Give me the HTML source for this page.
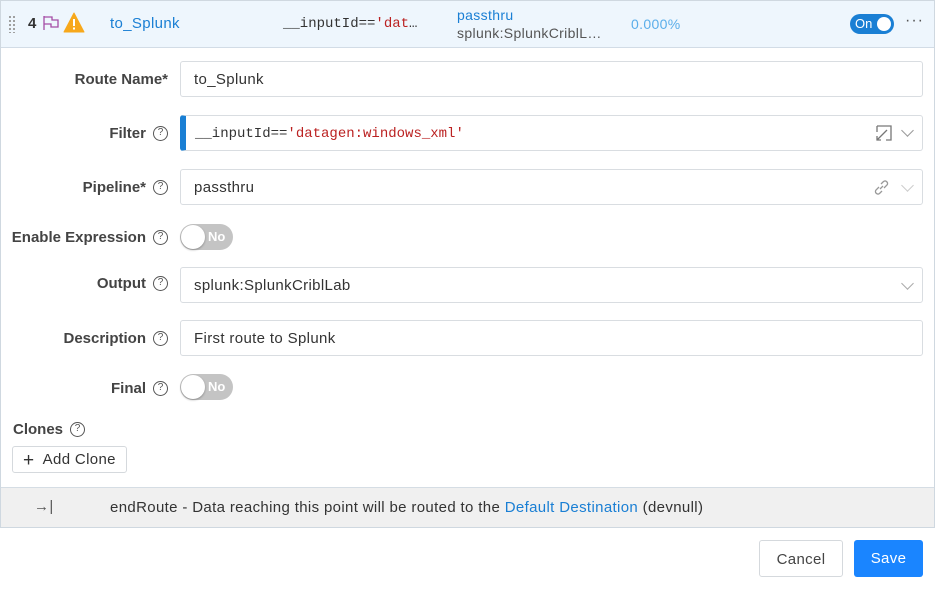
<!DOCTYPE html>
<html><head><style>
*{box-sizing:border-box;margin:0;padding:0}
body{width:936px;height:590px;background:#fff;font-family:"Liberation Sans",sans-serif;font-size:15px;color:#333;position:relative;overflow:hidden;letter-spacing:0.35px}
.abs{position:absolute}
.frame{left:0;top:0;width:935px;height:528px;border:1px solid #cfd8e0}
.hdr{left:1px;top:1px;width:933px;height:47px;background:#eef6fd;border-bottom:1px solid #d2dce6}
.lbl{position:absolute;right:768px;font-weight:bold;color:#444;font-size:15px;white-space:nowrap;display:flex;align-items:center;letter-spacing:0}
.q{display:inline-block;width:15px;height:15px;border:1.3px solid #555;border-radius:50%;font-size:10px;line-height:12px;text-align:center;font-weight:normal;margin-left:7px;color:#555}
.inp{position:absolute;left:180px;width:743px;height:36px;border:1px solid #d9dde1;border-radius:3px;padding-left:13px;line-height:36px;color:#333}
.tog{position:absolute;left:180px;width:53px;height:26px;border-radius:13px;background:#c4c4c4}
.tog::before{content:"";position:absolute;left:1px;top:1px;width:24px;height:24px;border-radius:50%;background:#fff;box-shadow:0 1px 2px rgba(0,0,0,.3)}
.tog span{position:absolute;left:28px;top:5px;color:#fff;font-size:13px;font-weight:bold;letter-spacing:0}
.mono{font-family:"Liberation Mono",monospace;font-size:14px;letter-spacing:0}
.chev{position:absolute;right:10px;top:11px;width:9px;height:9px;border-right:1.3px solid #999;border-bottom:1.3px solid #999;transform:rotate(45deg)}
</style></head><body>
<div class="abs frame"></div>
<div class="abs hdr"></div>
<div class="abs" style="left:8px;top:15px;width:8px;height:18px;background-image:radial-gradient(#999 1px,transparent 1.2px);background-size:4px 4px"></div>
<div class="abs" style="left:28px;top:15px;font-weight:bold;color:#333">4</div>
<svg class="abs" style="left:42px;top:15px" width="18" height="16" viewBox="0 0 18 16"><path d="M2 1v14M2 2h8v3h6v7H9V9H2" fill="none" stroke="#a44ca6" stroke-width="1.3"/></svg>
<svg class="abs" style="left:63px;top:12px" width="22" height="21" viewBox="0 0 22 21"><path d="M11 1L21 20H1Z" fill="#f7a81b" stroke="#f7a81b" stroke-linejoin="round"/><rect x="10" y="7" width="2" height="7" fill="#fff"/><rect x="10" y="15.5" width="2" height="2" fill="#fff"/></svg>
<div class="abs" style="left:110px;top:15px;color:#1a7fd4">to_Splunk</div>
<div class="abs mono" style="left:283px;top:16px;color:#333">__inputId==<span style="color:#b22">'dat</span>…</div>
<div class="abs" style="left:457px;top:7px;color:#1a7fd4;font-size:14px">passthru</div>
<div class="abs" style="left:457px;top:25px;color:#555;font-size:14px">splunk:SplunkCriblL…</div>
<div class="abs" style="left:631px;top:16px;color:#5aaeea;font-size:14px">0.000%</div>
<div class="abs" style="left:850px;top:14px;width:44px;height:20px;border-radius:10px;background:#1a7fd4"><span style="position:absolute;left:5px;top:2px;color:#fff;font-size:13px;letter-spacing:0">On</span><span style="position:absolute;right:3px;top:3px;width:14px;height:14px;border-radius:50%;background:#fff"></span></div>
<div class="abs" style="left:905px;top:12px;color:#555;font-size:16px;letter-spacing:1px">···</div>

<div class="lbl" style="top:71px">Route Name*</div>
<div class="inp" style="top:61px">to_Splunk</div>

<div class="lbl" style="top:125px">Filter<span class="q">?</span></div>
<div class="inp mono" style="top:115px;border-left:6px solid #1a7fd4;padding-left:9px">__inputId==<span style="color:#b22">'datagen:windows_xml'</span>
<svg style="position:absolute;right:30px;top:9px" width="18" height="18" viewBox="0 0 18 18"><path d="M3 1h14v14h-5M3 1v6M13 5L3 15M3 11v4h4" fill="none" stroke="#777" stroke-width="1.3"/></svg><span class="chev" style="top:10px"></span></div>

<div class="lbl" style="top:179px">Pipeline*<span class="q">?</span></div>
<div class="inp" style="top:169px">passthru
<svg style="position:absolute;right:32px;top:9px" width="17" height="17" viewBox="0 0 17 17"><path d="M7 10l3-3M6 8L3 11a2.5 2.5 0 0 0 3.5 3.5L9 12M11 9l3-3A2.5 2.5 0 0 0 10.5 2.5L8 5" fill="none" stroke="#999" stroke-width="1.3"/></svg><span class="chev" style="border-color:#ccc"></span></div>

<div class="lbl" style="top:229px">Enable Expression<span class="q">?</span></div>
<div class="tog" style="top:224px"><span>No</span></div>

<div class="lbl" style="top:275px">Output<span class="q">?</span></div>
<div class="inp" style="top:267px">splunk:SplunkCriblLab<span class="chev" style="border-color:#aaa"></span></div>

<div class="lbl" style="top:330px">Description<span class="q">?</span></div>
<div class="inp" style="top:320px">First route to Splunk</div>

<div class="lbl" style="top:380px">Final<span class="q">?</span></div>
<div class="tog" style="top:374px"><span>No</span></div>

<div class="abs" style="left:13px;top:421px;font-weight:bold;color:#444;display:flex;align-items:center;letter-spacing:0">Clones<span class="q">?</span></div>
<div class="abs" style="left:12px;top:446px;width:115px;height:27px;border:1px solid #d5d9dd;border-radius:3px;line-height:25px;padding-left:10px;color:#333"><span style="font-size:19px;vertical-align:-2px">+</span>&nbsp; Add Clone</div>

<div class="abs" style="left:1px;top:487px;width:933px;height:40px;background:#f0f0f0;border-top:1px solid #d5dde4"></div>
<div class="abs" style="left:34px;top:498px;color:#555">→|</div>
<div class="abs" style="left:110px;top:499px;color:#333">endRoute - Data reaching this point will be routed to the <span style="color:#1a7fd4">Default Destination</span> (devnull)</div>

<div class="abs" style="left:759px;top:540px;width:84px;height:37px;border:1px solid #d5d9dd;border-radius:3px;text-align:center;line-height:37px;color:#444">Cancel</div>
<div class="abs" style="left:854px;top:540px;width:69px;height:37px;background:#1a85ff;border-radius:3px;text-align:center;line-height:38px;color:#fff">Save</div>
</body></html>
